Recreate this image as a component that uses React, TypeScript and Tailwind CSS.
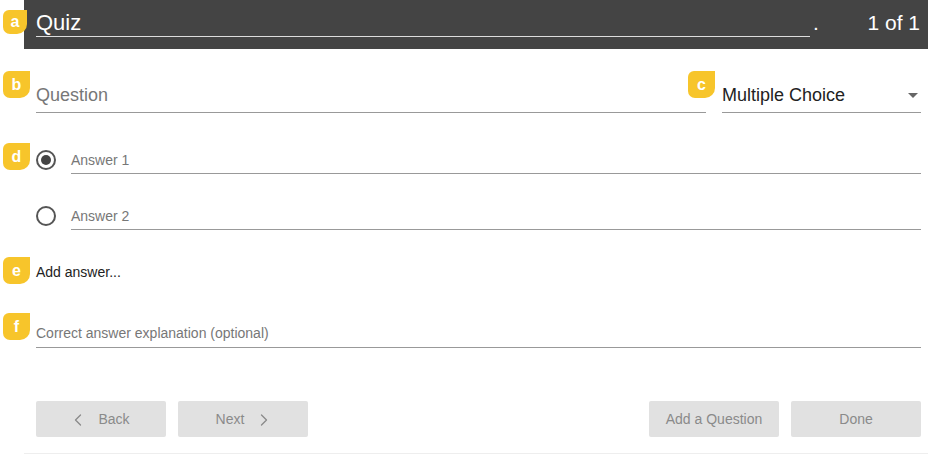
import { ChevronLeft, ChevronRight } from 'lucide-react'

const font = { fontFamily: '"Liberation Sans", Arial, sans-serif' }

function Badge({ letter, className }: { letter: string; className: string }) {
  return (
    <div
      className={`absolute flex items-center justify-center bg-[#f7c52b] text-white font-bold text-[16px] leading-none rounded-tl-[6px] rounded-bl-[7px] rounded-br-[10px] rounded-tr-none ${className}`}
    >
      <span>{letter}</span>
    </div>
  )
}

function Radio({ checked }: { checked?: boolean }) {
  return (
    <div className="flex h-5 w-5 shrink-0 items-center justify-center rounded-full border-2 border-[#555]">
      {checked && <div className="h-[10px] w-[10px] rounded-full bg-[#444]" />}
    </div>
  )
}

function AnswerRow({ label, checked, className }: { label: string; checked?: boolean; className: string }) {
  return (
    <div className={`flex items-start gap-[15px] ${className}`}>
      <Radio checked={checked} />
      <div className="flex-1 border-b border-[#999] pb-[3px] text-[14px] leading-[20px] text-[#777]">{label}</div>
    </div>
  )
}

function Btn({ children }: { children: React.ReactNode }) {
  return (
    <button className="flex h-9 w-[130px] items-center justify-center gap-[10px] rounded-[2px] bg-[#e1e1e1] pt-[1px] text-[14px] text-[#8a8a8a]">
      {children}
    </button>
  )
}

export default function App() {
  return (
    <div className="relative h-[455px] w-[928px] bg-white" style={font}>
      <div className="ml-6">
        <header className="flex h-[49px] bg-[#444] pl-3 pr-2 text-white">
          <div className="mt-[10px] h-[27px] w-[774px] border-b border-[#ddd] text-[22px] leading-[26px]">Quiz</div>
          <div className="ml-[3px] mt-[10px] text-[21px] leading-[26px]">.</div>
          <div className="ml-auto mt-[10px] text-[21px] leading-[26px]">1 of 1</div>
        </header>

        <div className="pl-3 pr-[7px]">
          <div className="mt-[34px] flex gap-4">
            <div className="flex-1 border-b border-[#999] pb-[5px] text-[18px] leading-[24px] text-[#777]">Question</div>
            <div className="flex w-[199px] items-center border-b border-[#999] pb-[5px] text-[18px] leading-[24px] text-[#222]">
              <span className="flex-1">Multiple Choice</span>
              <svg width="10" height="5" viewBox="0 0 10 5" className="mr-[3px] mt-[1px]">
                <path d="M0 0h10L5 5z" fill="#666" />
              </svg>
            </div>
          </div>

          <AnswerRow label="Answer 1" checked className="mt-[37px]" />
          <AnswerRow label="Answer 2" className="mt-[32px]" />

          <div className="mt-[32px] text-[14px] leading-[20px] text-[#222]">Add answer...</div>

          <div className="mt-[41px] border-b border-[#999] pb-[4px] text-[14px] leading-[20px] text-[#777]">
            Correct answer explanation (optional)
          </div>

          <div className="mt-[53px] flex">
            <div className="flex gap-3">
              <Btn>
                <ChevronLeft size={20} strokeWidth={1.6} className="-ml-1" />
                Back
              </Btn>
              <Btn>
                Next
                <ChevronRight size={20} strokeWidth={1.6} className="-mr-1" />
              </Btn>
            </div>
            <div className="ml-auto flex gap-3">
              <Btn>Add a Question</Btn>
              <Btn>Done</Btn>
            </div>
          </div>
        </div>

        <div className="mt-4 border-t border-[#eee]" />
      </div>

      <Badge letter="a" className="left-[3px] top-[10px] h-[24px] w-[24px]" />
      <Badge letter="b" className="left-[3px] top-[71px] h-[27px] w-[27px]" />
      <Badge letter="c" className="left-[688px] top-[71px] h-[27px] w-[27px]" />
      <Badge letter="d" className="left-[3px] top-[143px] h-[27px] w-[27px]" />
      <Badge letter="e" className="left-[3px] top-[257px] h-[27px] w-[27px]" />
      <Badge letter="f" className="left-[3px] top-[313px] h-[27px] w-[27px]" />
    </div>
  )
}
